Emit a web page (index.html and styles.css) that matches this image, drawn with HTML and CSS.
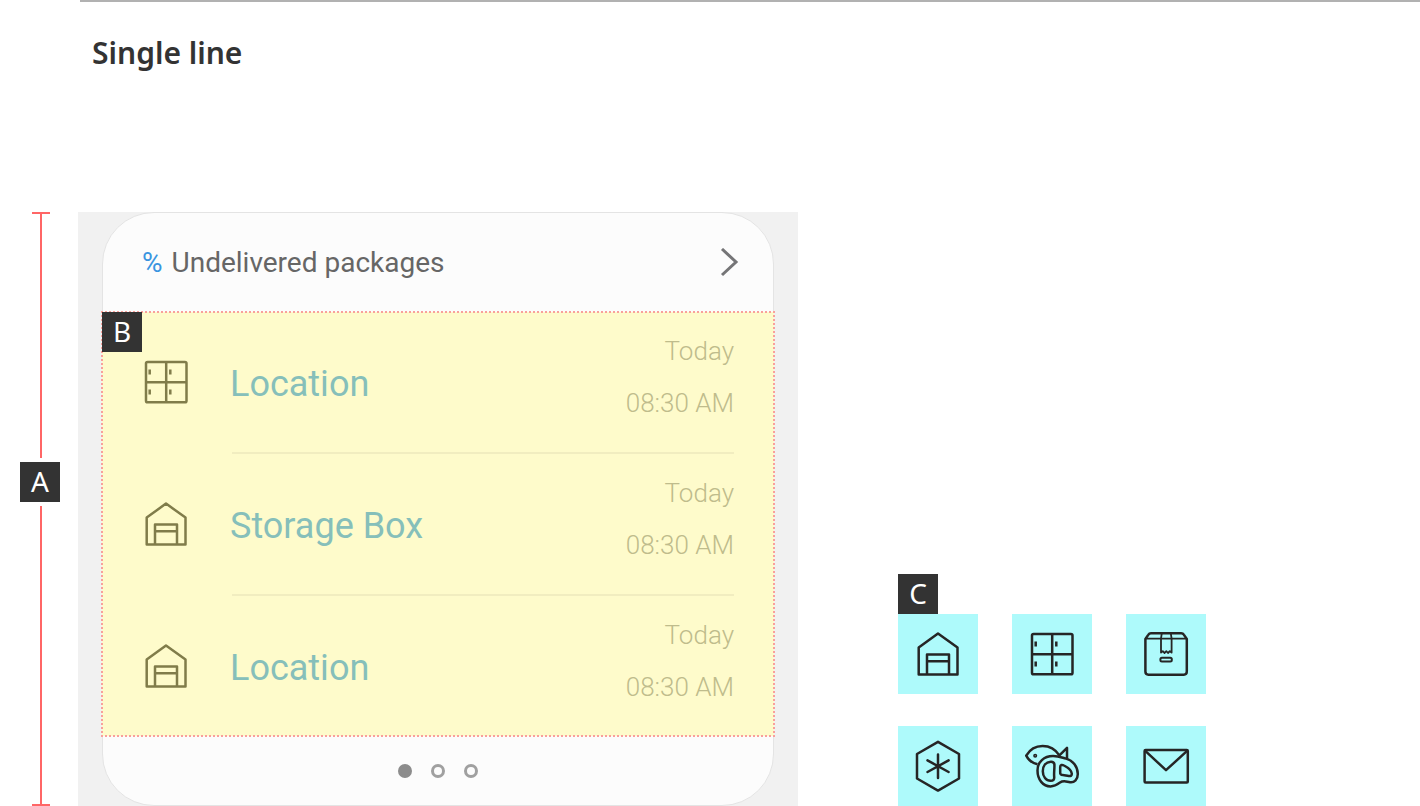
FILE: index.html
```html
<!DOCTYPE html>
<html lang="en">
<head>
<meta charset="utf-8">
<title>Single line</title>
<link rel="stylesheet" href="styles.css">
</head>
<body>
<svg class="sprite" aria-hidden="true">
  <symbol id="house" viewBox="16 16 48 48">
    <path d="M40 19.6 L59.5 33.6 V60.6 H20.7 V33.6 Z"/>
    <path d="M29 60 V40.4 H51 V60 M29 47.2 H51"/>
  </symbol>
  <symbol id="locker" viewBox="16 16 48 48">
    <rect x="20" y="20" width="40.5" height="40.3" rx="1.6"/>
    <path d="M40.2 20 V60 M20 40.2 H60"/>
    <path d="M23.7 27.6 V32.4 M44.3 27.6 V32.4 M23.7 47.6 V52.4 M44.3 47.6 V52.4"/>
  </symbol>
  <symbol id="parcel" viewBox="16 16 48 48">
    <path d="M19.4 25 L22.4 20.6 Q23.2 19.2 25 19.2 H55.2 Q57 19.2 57.8 20.6 L60.8 25 V57.6 Q60.8 60.7 57.8 60.7 H22.4 Q19.4 60.7 19.4 57.6 Z"/>
    <path d="M19.4 24.6 H60.8" stroke-width="1.7"/>
    <path d="M35.8 19.2 L35 24.6 V38.6 L36.8 37.2 L38.6 39 L40.3 37.2 L42 39 L43.8 37.2 L45.6 38.6 V24.6 L44.8 19.2" stroke-width="1.8"/>
    <rect x="34.4" y="43.7" width="11.4" height="3.8" rx="1.5" stroke-width="2"/>
  </symbol>
  <symbol id="frozen" viewBox="12 12 56 56">
    <path d="M40 15.8 L61 28 V52.5 L40 64.6 L19 52.5 V28 Z"/>
    <path d="M40 28.5 V52 M29.5 34.4 L50.6 46 M50.6 34.4 L29.5 46" stroke-linecap="round"/>
  </symbol>
  <symbol id="food" viewBox="12 12 56 56">
    <path d="M25.5 38.3 C20.5 37.1 16.3 33.6 14.2 29.6 C18 23.2 24 20 30.6 20 C37.8 20 43.4 23.2 47.4 29.4 L55 21.8 V32.8"/>
    <path d="M25.5 44.5 C25.5 36 32 30 41 30 C47 30 50 31.6 54 32.6 C61 34.4 65.8 41 65.8 48 C65.8 53.4 62.4 56.8 58 56.2 C54.4 55.8 51.6 54 48 56.6 C44.8 59 42.6 60.4 38.5 60.4 C31 60.4 25.5 53.6 25.5 44.5 Z"/>
    <path d="M42.4 38.4 C42.2 36.6 40.8 35.6 38.8 35.7 C33.8 36 30.8 40 30.8 45.2 C30.8 50.6 34 54.8 38.6 54.8 C41.4 54.8 42.4 53.4 42.2 51 C41.8 46.6 42.6 42.8 42.4 38.4 Z"/>
    <path d="M48.2 41 C48.2 38.8 50 38.4 52 39.5 C56.2 41.6 59.4 44.4 59.8 47.6 C60 49.6 58.8 50.2 56.8 50 C54.4 49.8 52.8 49 50.8 49 C48.8 49 48 48 48.2 46 Z"/>
    <circle cx="23.2" cy="29.7" r="0.8"/>
  </symbol>
  <symbol id="mail" viewBox="16 16 48 48">
    <rect x="18.6" y="23.9" width="43.2" height="32.5" rx="1"/>
    <path d="M19 24.6 L40 44.2 L61.4 24.6"/>
  </symbol>
</svg>

<header class="page-head">
  <h1>Single line</h1>
</header>

<main class="spec">
  <div class="ruler">
    <div class="ruler-line ruler-top"></div>
    <span class="tag">A</span>
    <div class="ruler-line ruler-bottom"></div>
  </div>

  <section class="stage">
    <article class="card">
      <header class="card-head">
        <span class="percent">%</span>
        <h2>Undelivered packages</h2>
        <button class="next" type="button" aria-label="Open">
          <svg viewBox="0 0 20 30"><path d="M3 1 L17 14 L3 27"/></svg>
        </button>
      </header>
      <div class="list-area">
        <span class="tag tag-over">B</span>
        <ul class="list">
          <li><div class="row">
            <svg class="icon"><use href="#locker"/></svg>
            <span class="name">Location</span>
            <span class="time">Today<br>08:30 AM</span>
          </div></li>
          <li><div class="row">
            <svg class="icon"><use href="#house"/></svg>
            <span class="name">Storage Box</span>
            <span class="time">Today<br>08:30 AM</span>
          </div></li>
          <li><div class="row">
            <svg class="icon"><use href="#house"/></svg>
            <span class="name">Location</span>
            <span class="time">Today<br>08:30 AM</span>
          </div></li>
        </ul>
      </div>
      <footer class="pager">
        <span class="dot dot-on"></span><span class="dot"></span><span class="dot"></span>
      </footer>
    </article>
  </section>

  <section class="icons">
    <span class="tag">C</span>
    <div class="tiles">
      <div class="tile"><svg class="icon"><use href="#house"/></svg></div>
      <div class="tile"><svg class="icon"><use href="#locker"/></svg></div>
      <div class="tile"><svg class="icon"><use href="#parcel"/></svg></div>
      <div class="tile"><svg class="icon icon-large"><use href="#frozen"/></svg></div>
      <div class="tile"><svg class="icon icon-large"><use href="#food"/></svg></div>
      <div class="tile"><svg class="icon"><use href="#mail"/></svg></div>
    </div>
  </section>
</main>
</body>
</html>
```

FILE: styles.css
```css
* { box-sizing: border-box; }

body {
  margin: 0;
  background: #fff;
  color: #333;
  font-family: Roboto, "Liberation Sans", sans-serif;
}

h1, h2, ul { margin: 0; padding: 0; }

.sprite { display: none; }

.page-head {
  margin-left: 80px;
  padding: 28px 12px 0;
  min-height: 212px;
  border-top: 2px solid #b1b1b1;
}

.page-head h1 {
  font: 600 30px/46px "Noto Sans", "Open Sans", sans-serif;
}

.spec { display: flex; }

.tag {
  display: block;
  flex: none;
  width: 40px;
  padding-bottom: 2px;
  background: #333;
  color: #fff;
  font: 400 28px/38px "Noto Sans", sans-serif;
  text-align: center;
}

/* Height marker */
.ruler {
  display: flex;
  flex-direction: column;
  gap: 4px;
  width: 58px;
  margin-left: 20px;
}

.ruler-line {
  display: flex;
  justify-content: center;
  width: 18px;
  margin-left: 12px;
}

.ruler-line::before {
  content: "";
  width: 2px;
  background: #ff6666;
}

.ruler-top { flex: 41; border-top: 2px solid #ff6666; }
.ruler-bottom { flex: 50; border-bottom: 2px solid #ff6666; }

/* Card */
.stage {
  flex: 0 1 720px;
  padding: 0 24px;
  background: #f1f1f1;
}

.card {
  border: 1px solid #e4e4e4;
  border-radius: 52px;
  background: #fcfcfc;
}

.card-head {
  display: flex;
  align-items: center;
  min-height: 99px;
  padding: 0 34px 0 39px;
  color: #666;
  font-size: 28px;
}

.percent { margin-right: 9px; color: #3a94e0; }

.card-head h2 { font-size: 28px; font-weight: 400; }

.next {
  display: flex;
  margin-left: auto;
  padding: 0;
  border: 0;
  background: none;
}

.next svg {
  width: 20px;
  height: 30px;
  fill: none;
  stroke: #757577;
  stroke-width: 3;
}

.list-area {
  position: relative;
  margin: 0 -1px;
  background: #fefbcb;
  outline: 2px dotted #f9a09b;
  outline-offset: -1px;
}

.tag-over { position: absolute; top: 0; left: 0; }

.list { list-style: none; }

.list li:not(:last-child)::after {
  content: "";
  display: block;
  height: 2px;
  margin: 0 40px 0 130px;
  background: #f1edc0;
}

.row {
  display: flex;
  align-items: center;
  min-height: 140px;
  padding: 0 40px;
  color: #807c4a;
}

.icon {
  width: 48px;
  height: 48px;
  fill: none;
  stroke: currentColor;
  stroke-width: 2.5;
  stroke-linejoin: round;
}

.icon-large { width: 56px; height: 56px; }

.name {
  margin-left: 40px;
  padding-top: 4px;
  color: #86bfba;
  font-size: 36px;
}

.time {
  margin-left: auto;
  padding-bottom: 10px;
  color: #bfbc8c;
  font-size: 26px;
  font-weight: 300;
  line-height: 52px;
  text-align: right;
}

.pager {
  display: flex;
  align-items: center;
  justify-content: center;
  gap: 19px;
  min-height: 69px;
}

.dot {
  width: 14px;
  height: 14px;
  border: 3px solid #a0a0a0;
  border-radius: 50%;
}

.dot-on { border-color: #8c8c8c; background: #8c8c8c; }

/* Icon set */
.icons { align-self: flex-end; margin-left: 100px; }

.tiles {
  display: grid;
  grid-template-columns: repeat(3, 80px);
  gap: 32px 34px;
}

.tile {
  display: grid;
  place-items: center;
  height: 80px;
  background: #aefafb;
  color: #252525;
}
```
